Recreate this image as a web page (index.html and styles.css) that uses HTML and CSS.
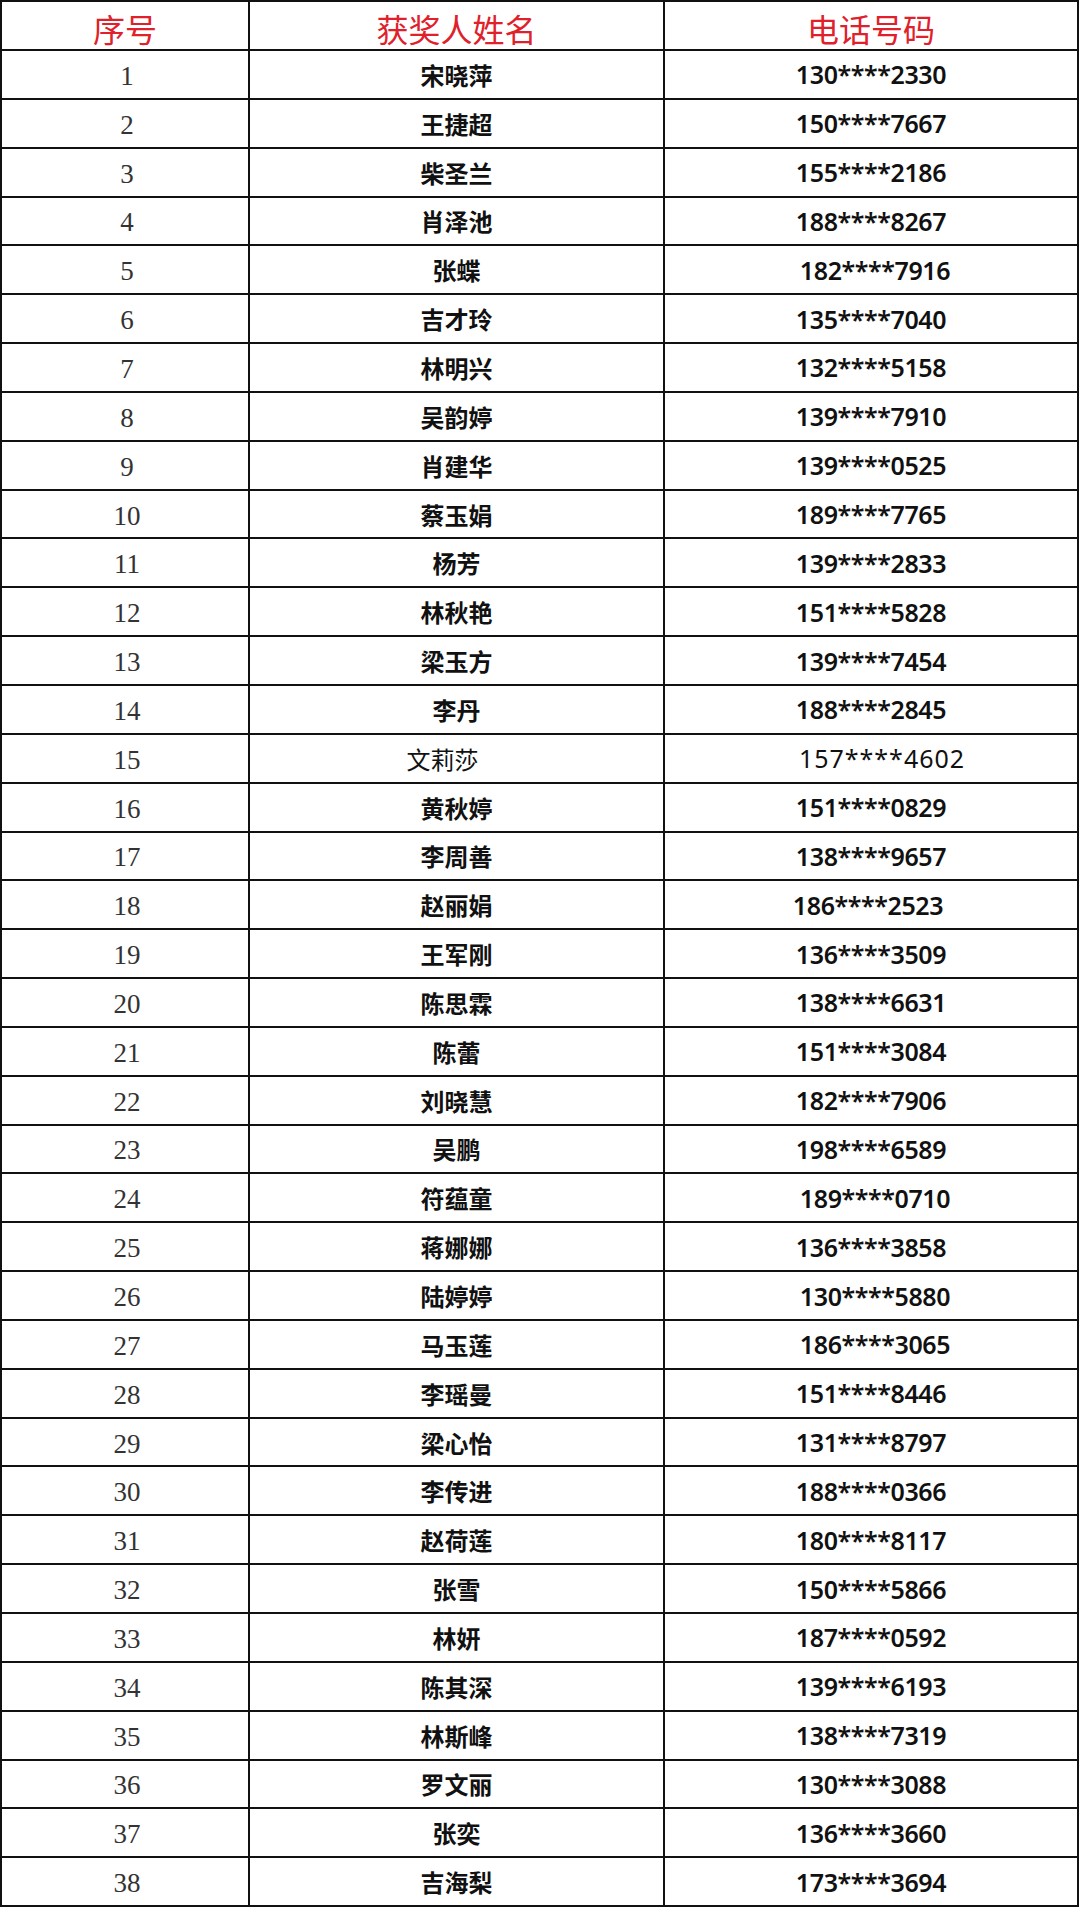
FILE: index.html
```html
<!DOCTYPE html>
<html lang="zh-CN">
<head>
<meta charset="utf-8">
<title>获奖名单</title>
<link rel="stylesheet" href="styles.css">
</head>
<body>
<div class="sheet">
  <div class="cell head">序号</div><div class="cell head">获奖人姓名</div><div class="cell head">电话号码</div>
  <div class="cell no">1</div><div class="cell name">宋晓萍</div><div class="cell tel">130****2330</div>
  <div class="cell no">2</div><div class="cell name">王捷超</div><div class="cell tel">150****7667</div>
  <div class="cell no">3</div><div class="cell name">柴圣兰</div><div class="cell tel">155****2186</div>
  <div class="cell no">4</div><div class="cell name">肖泽池</div><div class="cell tel">188****8267</div>
  <div class="cell no">5</div><div class="cell name">张蝶</div><div class="cell tel shift-r">182****7916</div>
  <div class="cell no">6</div><div class="cell name">吉才玲</div><div class="cell tel">135****7040</div>
  <div class="cell no">7</div><div class="cell name">林明兴</div><div class="cell tel">132****5158</div>
  <div class="cell no">8</div><div class="cell name">吴韵婷</div><div class="cell tel">139****7910</div>
  <div class="cell no">9</div><div class="cell name">肖建华</div><div class="cell tel">139****0525</div>
  <div class="cell no">10</div><div class="cell name">蔡玉娟</div><div class="cell tel">189****7765</div>
  <div class="cell no">11</div><div class="cell name">杨芳</div><div class="cell tel">139****2833</div>
  <div class="cell no">12</div><div class="cell name">林秋艳</div><div class="cell tel">151****5828</div>
  <div class="cell no">13</div><div class="cell name">梁玉方</div><div class="cell tel">139****7454</div>
  <div class="cell no">14</div><div class="cell name">李丹</div><div class="cell tel">188****2845</div>
  <div class="cell no">15</div><div class="cell name plain">文莉莎</div><div class="cell tel plain">157****4602</div>
  <div class="cell no">16</div><div class="cell name">黄秋婷</div><div class="cell tel">151****0829</div>
  <div class="cell no">17</div><div class="cell name">李周善</div><div class="cell tel">138****9657</div>
  <div class="cell no">18</div><div class="cell name">赵丽娟</div><div class="cell tel shift-l">186****2523</div>
  <div class="cell no">19</div><div class="cell name">王军刚</div><div class="cell tel">136****3509</div>
  <div class="cell no">20</div><div class="cell name">陈思霖</div><div class="cell tel">138****6631</div>
  <div class="cell no">21</div><div class="cell name">陈蕾</div><div class="cell tel">151****3084</div>
  <div class="cell no">22</div><div class="cell name">刘晓慧</div><div class="cell tel">182****7906</div>
  <div class="cell no">23</div><div class="cell name">吴鹏</div><div class="cell tel">198****6589</div>
  <div class="cell no">24</div><div class="cell name">符蕴童</div><div class="cell tel shift-r">189****0710</div>
  <div class="cell no">25</div><div class="cell name">蒋娜娜</div><div class="cell tel">136****3858</div>
  <div class="cell no">26</div><div class="cell name">陆婷婷</div><div class="cell tel shift-r">130****5880</div>
  <div class="cell no">27</div><div class="cell name">马玉莲</div><div class="cell tel shift-r">186****3065</div>
  <div class="cell no">28</div><div class="cell name">李瑶曼</div><div class="cell tel">151****8446</div>
  <div class="cell no">29</div><div class="cell name">梁心怡</div><div class="cell tel">131****8797</div>
  <div class="cell no">30</div><div class="cell name">李传进</div><div class="cell tel">188****0366</div>
  <div class="cell no">31</div><div class="cell name">赵荷莲</div><div class="cell tel">180****8117</div>
  <div class="cell no">32</div><div class="cell name">张雪</div><div class="cell tel">150****5866</div>
  <div class="cell no">33</div><div class="cell name">林妍</div><div class="cell tel">187****0592</div>
  <div class="cell no">34</div><div class="cell name">陈其深</div><div class="cell tel">139****6193</div>
  <div class="cell no">35</div><div class="cell name">林斯峰</div><div class="cell tel">138****7319</div>
  <div class="cell no">36</div><div class="cell name">罗文丽</div><div class="cell tel">130****3088</div>
  <div class="cell no">37</div><div class="cell name">张奕</div><div class="cell tel">136****3660</div>
  <div class="cell no">38</div><div class="cell name">吉海梨</div><div class="cell tel">173****3694</div>
</div>
</body>
</html>
```
FILE: styles.css
```css
html, body {
  margin: 0;
  padding: 0;
  background: #ffffff;
}

.sheet {
  display: grid;
  grid-template-columns: 248px 415px 414px;
  grid-template-rows: 49px repeat(38, 48.85px);
  width: 1079px;
  border-left: 2px solid #111;
  border-top: 2px solid #111;
  box-sizing: border-box;
}

.cell {
  display: flex;
  align-items: center;
  justify-content: center;
  border-right: 2px solid #111;
  border-bottom: 2px solid #111;
  box-sizing: border-box;
  overflow: hidden;
  white-space: nowrap;
}

.head {
  font-family: "Noto Sans CJK SC", "Noto Sans", sans-serif;
  font-size: 32px;
  font-weight: 400;
  color: #e0202a;
  padding-top: 4px;
}

.no {
  font-family: "Liberation Serif", "DejaVu Serif", "Noto Sans CJK SC", serif;
  font-size: 27px;
  color: #333;
  padding-top: 4px;
  padding-left: 4px;
}

.name {
  font-family: "Noto Sans CJK SC", "Noto Sans", sans-serif;
  font-size: 24px;
  font-weight: 700;
  color: #111;
}

.name.plain {
  font-weight: 400;
  padding-right: 28px;
}

.tel {
  font-family: "Noto Sans", "Open Sans", sans-serif;
  font-size: 25px;
  font-weight: 600;
  letter-spacing: -0.4px;
  color: #111;
}

.tel.plain {
  font-weight: 400;
  letter-spacing: 1px;
  padding-left: 22px;
}

.tel.shift-r {
  padding-left: 8px;
}

.tel.shift-l {
  padding-right: 6px;
}
```
